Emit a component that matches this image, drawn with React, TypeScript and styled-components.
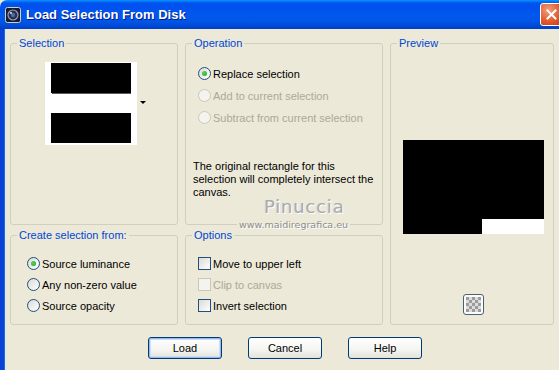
import React from "react";
import { styled, createGlobalStyle } from "styled-components";

const GlobalStyle = createGlobalStyle`
  html, body {
    margin: 0;
    padding: 0;
    background: #ece9d8;
  }
  body {
    font-family: "Liberation Sans", Arial, sans-serif;
    font-size: 11px;
  }
`;

const Window = styled.div`
  width: 559px;
  height: 370px;
  display: flex;
  flex-direction: column;
  overflow: hidden;
  background: #ece9d8;
`;

const TitleBar = styled.div`
  height: 29px;
  flex-shrink: 0;
  display: flex;
  align-items: center;
  padding-left: 5px;
  gap: 5px;
  border-top-left-radius: 7px;
  background: linear-gradient(
    to bottom,
    #0997ff 0px,
    #0053ee 3px,
    #0050ee 6px,
    #0058ee 14px,
    #0055e5 22px,
    #0046d0 27px,
    #003dc6 29px
  );
`;

const Title = styled.span`
  color: #fff;
  font-family: "Liberation Sans", Arial, sans-serif;
  font-weight: bold;
  font-size: 13px;
  text-shadow: 1px 1px 0 #0a1883;
  flex: 1;
`;

const CloseButton = styled.div`
  width: 21px;
  height: 21px;
  margin-right: -4px;
  border: 1px solid #fff;
  border-radius: 3px;
  background: radial-gradient(circle at 35% 30%, #f0a080, #e45a2e 55%, #c2350e);
  display: flex;
  align-items: center;
  justify-content: center;
`;

const Body = styled.div`
  flex: 1;
  border-left: 4px solid #0842d6;
  box-shadow: inset 1px 0 0 #166aee;
  padding: 14px 0 0 6px;
`;

const Grid = styled.div`
  display: grid;
  grid-template-columns: 168px 198px 164px;
  grid-template-rows: 182px 90px;
  column-gap: 7px;
  row-gap: 10px;
`;

const Group = styled.div<{ $col: number; $row: string }>`
  position: relative;
  box-sizing: border-box;
  border: 1px solid #d0d0bf;
  border-radius: 3px;
  grid-column: ${(p) => p.$col};
  grid-row: ${(p) => p.$row};
  display: flex;
  flex-direction: column;
`;

const GroupLabel = styled.span`
  position: absolute;
  top: -7px;
  left: 6px;
  padding: 0 2px;
  background: #ece9d8;
  color: #0046d5;
  line-height: 13px;
`;

const ThumbRow = styled.div`
  display: flex;
  align-items: center;
  padding: 18px 0 0 34px;
`;

const Thumb = styled.div`
  width: 92px;
  height: 83px;
  box-sizing: border-box;
  background: #fff;
  padding: 1px 6px 2px 6px;
  display: flex;
  flex-direction: column;
`;

const Band = styled.div<{ $white?: boolean }>`
  height: ${(p) => (p.$white ? "20px" : "30px")};
  background: ${(p) => (p.$white ? "#fff" : "#000")};
  border-top: ${(p) => (p.$white ? "1px solid #5a5a5a" : "none")};
  margin-left: ${(p) => (p.$white ? "1px" : "0")};
`;

const DropArrow = styled.div`
  width: 0;
  height: 0;
  margin-left: 3px;
  margin-top: -2px;
  border-left: 3px solid transparent;
  border-right: 3px solid transparent;
  border-top: 3px solid #000;
`;

const OptionList = styled.div<{ $left: number; $top: number; $gap: number }>`
  display: flex;
  flex-direction: column;
  gap: ${(p) => p.$gap}px;
  padding: ${(p) => p.$top}px 0 0 ${(p) => p.$left}px;
`;

const OptionRow = styled.div<{ $disabled?: boolean }>`
  display: flex;
  align-items: center;
  gap: 2px;
  height: 13px;
  color: ${(p) => (p.$disabled ? "#aca899" : "#000")};
  white-space: nowrap;
`;

const Radio = styled.span<{ $checked?: boolean; $disabled?: boolean }>`
  box-sizing: border-box;
  flex-shrink: 0;
  width: 13px;
  height: 13px;
  border-radius: 50%;
  border: 1px solid ${(p) => (p.$disabled ? "#cac8bb" : "#1c5180")};
  background: ${(p) =>
    p.$disabled ? "#f4f3ee" : "linear-gradient(135deg, #dcdad5, #ffffff)"};
  display: flex;
  align-items: center;
  justify-content: center;
  &::after {
    content: "";
    display: ${(p) => (p.$checked ? "block" : "none")};
    width: 5px;
    height: 5px;
    border-radius: 50%;
    background: radial-gradient(circle at 40% 40%, #55d35a, #21a121);
  }
`;

const Check = styled.span<{ $disabled?: boolean }>`
  box-sizing: border-box;
  flex-shrink: 0;
  width: 13px;
  height: 13px;
  border: 1px solid ${(p) => (p.$disabled ? "#cac8bb" : "#1c5180")};
  background: ${(p) =>
    p.$disabled ? "#f4f3ee" : "linear-gradient(135deg, #dcdad5, #ffffff)"};
`;

const Note = styled.div`
  margin: 36px 0 0 7px;
  line-height: 13px;
  width: 185px;
`;

const Watermark = styled.div`
  position: absolute;
  left: 78px;
  top: 152px;
  font-family: "DejaVu Sans", sans-serif;
  font-size: 18px;
  letter-spacing: 0.8px;
  color: #ababab;
  text-shadow: 1px 1px 0 #fff, -1px 0 0 #d8d8d8;
`;

const WatermarkUrl = styled.div`
  position: absolute;
  left: 51px;
  top: 175px;
  padding: 0 2px;
  font-family: "DejaVu Sans", sans-serif;
  font-size: 9.5px;
  color: #8c8c8c;
  background: #ece9d8;
  text-shadow: 1px 1px 0 #fff;
`;

const PreviewImage = styled.div`
  width: 141px;
  height: 94px;
  margin: 96px 0 0 12px;
  background: #000;
  display: flex;
  justify-content: flex-end;
  align-items: flex-end;
`;

const PreviewHole = styled.div`
  width: 62px;
  height: 15px;
  background: #fff;
`;

const CheckerButton = styled.div`
  margin: auto 0 9px 72px;
  width: 21px;
  height: 21px;
  box-sizing: border-box;
  border: 1px solid #4a5f78;
  border-radius: 3px;
  background: #fbfbf8;
  display: flex;
  align-items: center;
  justify-content: center;
`;

const ButtonRow = styled.div`
  display: flex;
  gap: 26px;
  padding: 12px 0 0 138px;
`;

const Button = styled.button<{ $default?: boolean }>`
  width: 74px;
  height: 22px;
  box-sizing: border-box;
  padding: 0;
  border: 1px solid #003c74;
  border-radius: 3px;
  background: linear-gradient(to bottom, #ffffff, #f4f4f0 60%, #e3e2da);
  box-shadow: ${(p) =>
    p.$default ? "inset 0 0 0 1px #9ab8f0, inset 0 0 0 2px #cfdef8" : "none"};
  font-family: "Liberation Sans", Arial, sans-serif;
  font-size: 11px;
  color: #000;
`;

const AppIcon = () => (
  <svg width="16" height="16" viewBox="0 0 16 16">
    <rect x="0.5" y="0.5" width="15" height="15" rx="2" fill="#1a1a2a" stroke="#d0d0d0" />
    <circle cx="8" cy="8" r="5" fill="#2a3040" stroke="#8ea2c4" strokeWidth="1.2" />
    <circle cx="8" cy="8" r="2.2" fill="#4b6aa8" />
    <circle cx="6" cy="6" r="1" fill="#e0e0ff" />
  </svg>
);

const CloseIcon = () => (
  <svg width="11" height="11" viewBox="0 0 11 11">
    <path d="M1.5 1.5 L9.5 9.5 M9.5 1.5 L1.5 9.5" stroke="#fff" strokeWidth="2" strokeLinecap="square" />
  </svg>
);

const CheckerIcon = () => {
  const cells = [];
  for (let r = 0; r < 5; r++) {
    for (let c = 0; c < 5; c++) {
      if ((r + c) % 2 === 0) {
        cells.push(<rect key={`${r}-${c}`} x={c * 3} y={r * 3} width="3" height="3" fill="#9c9c9c" />);
      }
    }
  }
  return (
    <svg width="15" height="15" viewBox="0 0 15 15">
      <rect width="15" height="15" fill="#dcdcdc" />
      {cells}
    </svg>
  );
};

const App: React.FC = () => {
  return (
    <>
      <GlobalStyle />
      <Window>
        <TitleBar>
          <AppIcon />
          <Title>Load Selection From Disk</Title>
          <CloseButton>
            <CloseIcon />
          </CloseButton>
        </TitleBar>
        <Body>
          <Grid>
            <Group $col={1} $row="1">
              <GroupLabel>Selection</GroupLabel>
              <ThumbRow>
                <Thumb>
                  <Band />
                  <Band $white />
                  <Band />
                </Thumb>
                <DropArrow />
              </ThumbRow>
            </Group>
            <Group $col={2} $row="1">
              <GroupLabel>Operation</GroupLabel>
              <OptionList $left={12} $top={23} $gap={9}>
                <OptionRow>
                  <Radio $checked />
                  Replace selection
                </OptionRow>
                <OptionRow $disabled>
                  <Radio $disabled />
                  Add to current selection
                </OptionRow>
                <OptionRow $disabled>
                  <Radio $disabled />
                  Subtract from current selection
                </OptionRow>
              </OptionList>
              <Note>
                The original rectangle for this selection will completely
                intersect the canvas.
              </Note>
              <Watermark>Pinuccia</Watermark>
              <WatermarkUrl>www.maidiregrafica.eu</WatermarkUrl>
            </Group>
            <Group $col={3} $row="1 / span 2">
              <GroupLabel>Preview</GroupLabel>
              <PreviewImage>
                <PreviewHole />
              </PreviewImage>
              <CheckerButton>
                <CheckerIcon />
              </CheckerButton>
            </Group>
            <Group $col={1} $row="2">
              <GroupLabel>Create selection from:</GroupLabel>
              <OptionList $left={16} $top={21} $gap={8}>
                <OptionRow>
                  <Radio $checked />
                  Source luminance
                </OptionRow>
                <OptionRow>
                  <Radio />
                  Any non-zero value
                </OptionRow>
                <OptionRow>
                  <Radio />
                  Source opacity
                </OptionRow>
              </OptionList>
            </Group>
            <Group $col={2} $row="2">
              <GroupLabel>Options</GroupLabel>
              <OptionList $left={12} $top={21} $gap={8}>
                <OptionRow>
                  <Check />
                  Move to upper left
                </OptionRow>
                <OptionRow $disabled>
                  <Check $disabled />
                  Clip to canvas
                </OptionRow>
                <OptionRow>
                  <Check />
                  Invert selection
                </OptionRow>
              </OptionList>
            </Group>
          </Grid>
          <ButtonRow>
            <Button $default>Load</Button>
            <Button>Cancel</Button>
            <Button>Help</Button>
          </ButtonRow>
        </Body>
      </Window>
    </>
  );
};

export default App;
